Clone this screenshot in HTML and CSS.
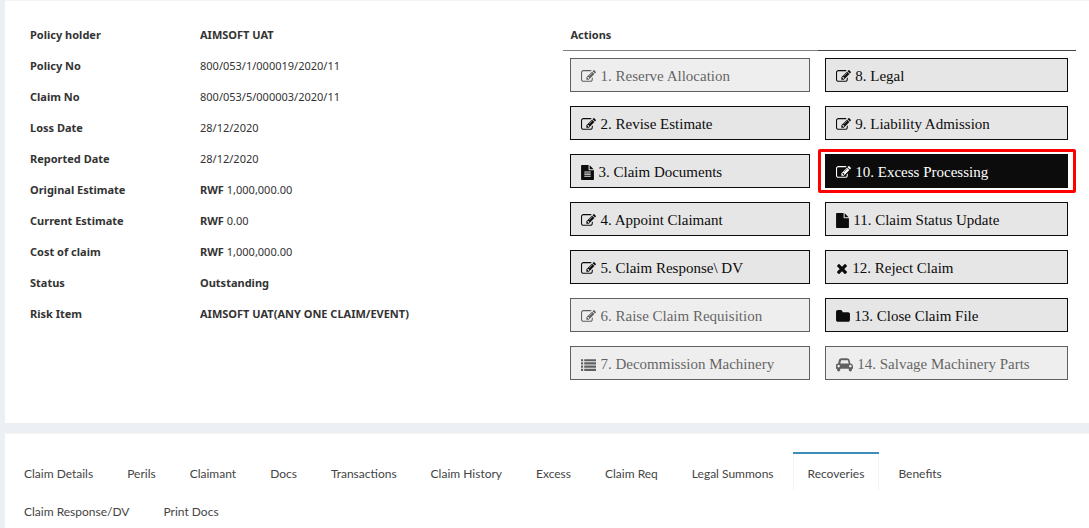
FILE: index.html
```
<!DOCTYPE html>
<html lang="en">
<head>
  <meta charset="utf-8">
  <title>Claim Details</title>
  <link rel="stylesheet" href="styles.css">
</head>
<body>
  <!-- icon set -->
  <svg class="sprite" aria-hidden="true">
    <symbol id="edit" viewBox="0 0 1792 1792"><path d="M888 1184l116-116-152-152-116 116v56h96v96h56zm440-720q-16-16-33 1l-350 350q-17 17-1 33t33-1l350-350q17-17 1-33zm80 594v190q0 119-84.500 203.500t-203.500 84.500h-832q-119 0-203.500-84.500t-84.500-203.500v-832q0-119 84.500-203.500t203.500-84.500h832q63 0 117 25 15 7 18 23 3 17-9 29l-49 49q-14 14-32 8-23-6-45-6h-832q-66 0-113 47t-47 113v832q0 66 47 113t113 47h832q66 0 113-47t47-113v-126q0-13 9-22l64-64q15-15 35-7t20 29zm-96-738l288 288-672 672h-288v-288zm444 132l-92 92-288-288 92-92q28-28 68-28t68 28l152 152q28 28 28 68t-28 68z"/></symbol>
    <symbol id="file" viewBox="128 0 1536 1792"><path d="M1152 512v-472q22 14 36 28l408 408q14 14 28 36h-472zm-128 32q0 40 28 68t68 28h544v1056q0 40-28 68t-68 28h-1344q-40 0-68-28t-28-68v-1600q0-40 28-68t68-28h800v544z"/></symbol>
    <symbol id="file-text" viewBox="128 0 1536 1792"><path fill-rule="evenodd" d="M1152 512v-472q22 14 36 28l408 408q14 14 28 36h-472zm-128 32q0 40 28 68t68 28h544v1056q0 40-28 68t-68 28h-1344q-40 0-68-28t-28-68v-1600q0-40 28-68t68-28h800v544zM512 768v128h768v-128zM512 1024v128h768v-128zM512 1280v128h768v-128z"/></symbol>
    <symbol id="list" viewBox="0 0 1792 1792"><path d="M0 256h256v256H0zM384 256h1408v256H384zM0 640h256v256H0zM384 640h1408v256H384zM0 1024h256v256H0zM384 1024h1408v256H384zM0 1408h256v256H0zM384 1408h1408v256H384z"/></symbol>
    <symbol id="times" viewBox="192 0 1408 1792"><path d="M1490 1322q0 40-28 68l-136 136q-28 28-68 28t-68-28l-294-294-294 294q-28 28-68 28t-68-28l-136-136q-28-28-28-68t28-68l294-294-294-294q-28-28-28-68t28-68l136-136q28-28 68-28t68 28l294 294 294-294q28-28 68-28t68 28l136 136q28 28 28 68t-28 68l-294 294 294 294q28 28 28 68z"/></symbol>
    <symbol id="folder" viewBox="64 0 1664 1792"><path d="M1728 608v704q0 92-66 158t-158 66h-1216q-92 0-158-66t-66-158v-960q0-92 66-158t158-66h320q92 0 158 66t66 158v32h672q92 0 158 66t66 158z"/></symbol>
    <symbol id="car" viewBox="0 0 2048 1792"><path d="M480 1088q0-66-47-113t-113-47-113 47-47 113 47 113 113 47 113-47 47-113zm36-320h1016l-89-357q-2-8-14-17.500t-21-9.500h-768q-9 0-21 9.500t-14 17.500zm1372 320q0-66-47-113t-113-47-113 47-47 113 47 113 113 47 113-47 47-113zm160-96v384q0 14-9 23t-23 9h-96v128q0 80-56 136t-136 56-136-56-56-136v-128h-1024v128q0 80-56 136t-136 56-136-56-56-136v-128h-96q-14 0-23-9t-9-23v-384q0-93 65.500-158.500t158.500-65.500h28l105-419q23-94 104-157.500t179-63.500h704q98 0 179 63.500t104 157.500l105 419h28q93 0 158.500 65.500t65.500 158.500z"/></symbol>
  </svg>

  <section class="box summary">
    <table class="details">
      <tr><th scope="row">Policy holder</th><td><b>AIMSOFT UAT</b></td></tr>
      <tr><th scope="row">Policy No</th><td>800/053/1/000019/2020/11</td></tr>
      <tr><th scope="row">Claim No</th><td>800/053/5/000003/2020/11</td></tr>
      <tr><th scope="row">Loss Date</th><td>28/12/2020</td></tr>
      <tr><th scope="row">Reported Date</th><td>28/12/2020</td></tr>
      <tr><th scope="row">Original Estimate</th><td><b>RWF</b> 1,000,000.00</td></tr>
      <tr><th scope="row">Current Estimate</th><td><b>RWF</b> 0.00</td></tr>
      <tr><th scope="row">Cost of claim</th><td><b>RWF</b> 1,000,000.00</td></tr>
      <tr><th scope="row">Status</th><td><b>Outstanding</b></td></tr>
      <tr><th scope="row">Risk Item</th><td><b>AIMSOFT UAT(ANY ONE CLAIM/EVENT)</b></td></tr>
    </table>

    <div class="actions">
      <h2 class="actions-title">Actions</h2>
      <div class="actions-columns">
        <div class="actions-col">
          <button type="button" class="btn" disabled><svg class="icon"><use href="#edit"/></svg>1. Reserve Allocation</button>
          <button type="button" class="btn"><svg class="icon"><use href="#edit"/></svg>2. Revise Estimate</button>
          <button type="button" class="btn"><svg class="icon icon-file"><use href="#file-text"/></svg>3. Claim Documents</button>
          <button type="button" class="btn"><svg class="icon"><use href="#edit"/></svg>4. Appoint Claimant</button>
          <button type="button" class="btn"><svg class="icon"><use href="#edit"/></svg>5. Claim Response\ DV</button>
          <button type="button" class="btn" disabled><svg class="icon"><use href="#edit"/></svg>6. Raise Claim Requisition</button>
          <button type="button" class="btn" disabled><svg class="icon"><use href="#list"/></svg>7. Decommission Machinery</button>
        </div>
        <div class="actions-col actions-col-right">
          <button type="button" class="btn"><svg class="icon"><use href="#edit"/></svg>8. Legal</button>
          <button type="button" class="btn"><svg class="icon"><use href="#edit"/></svg>9. Liability Admission</button>
          <button type="button" class="btn btn-active"><svg class="icon"><use href="#edit"/></svg>10. Excess Processing</button>
          <button type="button" class="btn"><svg class="icon icon-file"><use href="#file"/></svg>11. Claim Status Update</button>
          <button type="button" class="btn"><svg class="icon icon-times"><use href="#times"/></svg>12. Reject Claim</button>
          <button type="button" class="btn"><svg class="icon icon-folder"><use href="#folder"/></svg>13. Close Claim File</button>
          <button type="button" class="btn" disabled><svg class="icon icon-car"><use href="#car"/></svg>14. Salvage Machinery Parts</button>
        </div>
      </div>
    </div>
  </section>

  <section class="box tabs-box">
    <ul class="tabs">
      <li><a href="#">Claim Details</a></li>
      <li><a href="#">Perils</a></li>
      <li><a href="#">Claimant</a></li>
      <li><a href="#">Docs</a></li>
      <li><a href="#">Transactions</a></li>
      <li><a href="#">Claim History</a></li>
      <li><a href="#">Excess</a></li>
      <li><a href="#">Claim Req</a></li>
      <li><a href="#">Legal Summons</a></li>
      <li class="active"><a href="#">Recoveries</a></li>
      <li><a href="#">Benefits</a></li>
      <li><a href="#">Claim Response/DV</a></li>
      <li><a href="#">Print Docs</a></li>
    </ul>
  </section>
</body>
</html>
```
FILE: styles.css
```
* {
  box-sizing: border-box;
}

body {
  margin: 0;
  padding-left: 5px;
  background-color: #ecf0f5;
  color: #333;
  font-family: "Noto Sans", sans-serif;
  font-size: 11px;
  line-height: 18px;
}

.sprite {
  display: none;
}

.box {
  background-color: #fff;
  border-top: 1px solid #f4f4f4;
}

.summary {
  display: flex;
  align-items: flex-start;
  margin-bottom: 10px;
  padding: 18px 13px 43px 25px;
}

/* claim details */

.details {
  flex: 1;
  border-collapse: collapse;
}

.details th,
.details td {
  height: 31px;
  padding: 0;
  text-align: left;
}

.details th {
  width: 170px;
}

/* action buttons */

.actions {
  width: 49%;
}

.actions-title {
  margin: 0;
  padding: 7px;
  font-size: 11px;
  line-height: 17px;
}

.actions-columns {
  display: grid;
  grid-template-columns: 255fr 258fr;
}

.actions-col {
  display: flex;
  flex-direction: column;
  gap: 14px;
  padding: 7px 8px 0 7px;
  border-top: 1px solid #7d7d7d;
}

.actions-col-right {
  border-top-color: #444;
}

.btn {
  display: flex;
  align-items: center;
  gap: 4px;
  height: 34px;
  padding: 2px 10px 0;
  border: 1px solid #0c0c0c;
  border-radius: 0;
  background-color: #e6e6e6;
  color: #0c0c0c;
  font-family: "Liberation Serif", serif;
  font-size: 15px;
  cursor: pointer;
}

.btn:disabled {
  opacity: 0.65;
  cursor: not-allowed;
}

.btn-active {
  position: relative;
  background-color: #0c0c0c;
  color: #fff;
}

/* red highlight around the current action */
.btn-active::after {
  content: "";
  position: absolute;
  inset: -6px -9px -6px -8px;
  border: 3px solid #fe0000;
  border-radius: 2px;
}

.icon {
  width: 15px;
  height: 15px;
  fill: currentColor;
}

.icon-file {
  width: 13px;
}

.icon-times {
  width: 12px;
}

.icon-folder {
  width: 14px;
}

.icon-car {
  width: 17px;
}

/* tabs */

.tabs-box {
  min-height: 94px;
  padding: 18px 4px 0;
}

.tabs {
  display: flex;
  flex-wrap: wrap;
  margin: 0;
  padding: 0;
  list-style: none;
  font-family: Lato, "Noto Sans", sans-serif;
  font-size: 12px;
}

.tabs li {
  margin-right: 4px;
  border-top: 2px solid transparent;
}

.tabs a {
  display: block;
  padding: 11px 14px 7px;
  border: solid transparent;
  border-width: 0 1px;
  color: #444;
  text-decoration: none;
}

.tabs .active {
  border-top-color: #3c8dbc;
}

.tabs .active a {
  border-color: #f4f4f4;
}
```
